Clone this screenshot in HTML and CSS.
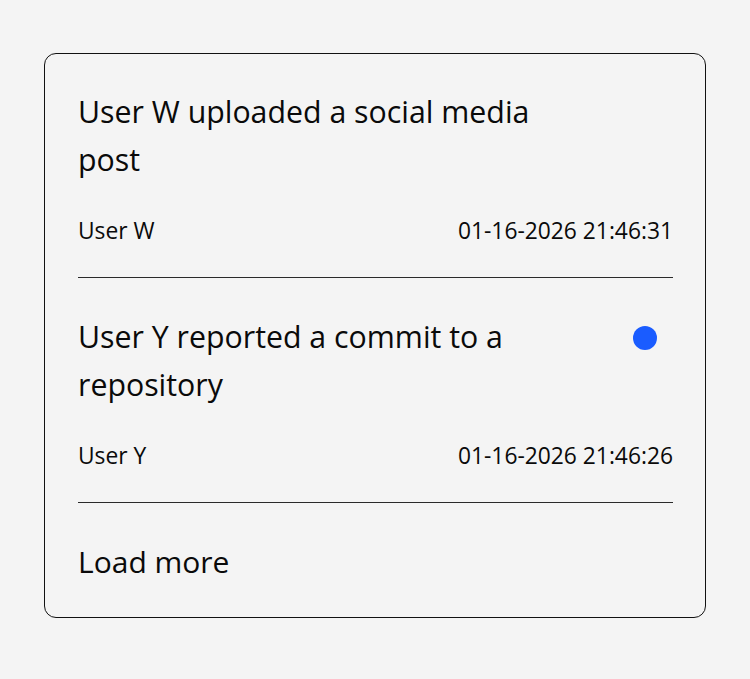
FILE: index.html
```html
<!DOCTYPE html>
<html lang="en">
<head>
    <meta charset="UTF-8">
    <meta name="viewport" content="width=device-width, initial-scale=1.0">
    <title>Activity</title>
    <link rel="stylesheet" href="styles.css">
</head>
<body>
    <div class="feed-card">
        <div class="feed-item">
            <div class="item-head">
                <h3 class="item-title">User W uploaded a social media post</h3>
            </div>
            <div class="item-meta">
                <span>User W</span>
                <span>01-16-2026 21:46:31</span>
            </div>
        </div>
        <div class="feed-item">
            <div class="item-head">
                <h3 class="item-title">User Y reported a commit to a repository</h3>
                <span class="unread-dot"></span>
            </div>
            <div class="item-meta">
                <span>User Y</span>
                <span>01-16-2026 21:46:26</span>
            </div>
        </div>
        <button class="load-more">Load more</button>
    </div>
</body>
</html>
```

FILE: styles.css
```css
body {
    font-family: "Open Sans", "Noto Sans", sans-serif;
    background-color: #f4f4f4;
    color: #0a0a0a;
    margin: 0;
    padding: 53px 44px;
}
.feed-card {
    border: 1px solid #111;
    border-radius: 12px;
    padding: 34px 32px 31px 33px;
    display: flex;
    flex-direction: column;
    gap: 35px;
}
.feed-item {
    display: flex;
    flex-direction: column;
    gap: 32px;
    padding-bottom: 31px;
    border-bottom: 1px solid #2a2a2a;
}
.item-head {
    display: flex;
    justify-content: space-between;
    align-items: flex-start;
}
.item-title {
    margin: 0;
    max-width: 490px;
    font-size: 30.3px;
    font-weight: normal;
    line-height: 48px;
}
.unread-dot {
    width: 24px;
    height: 24px;
    border-radius: 50%;
    background: #1a5cff;
    margin-top: 13px;
    margin-right: 16px;
}
.item-meta {
    display: flex;
    justify-content: space-between;
    font-size: 22.8px;
    line-height: 30px;
}
.load-more {
    align-self: flex-start;
    background: none;
    border: none;
    padding: 0;
    font-family: inherit;
    font-size: 30px;
    line-height: 48px;
    color: #0a0a0a;
    cursor: pointer;
}
```
